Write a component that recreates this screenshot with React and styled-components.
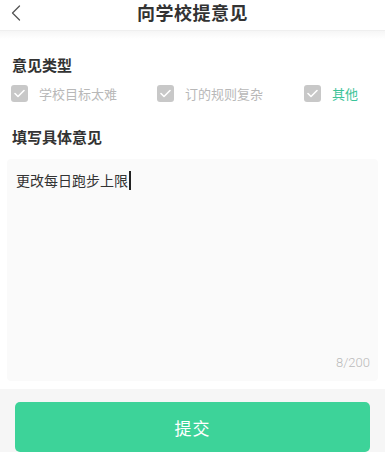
import React from 'react'
import styled, { createGlobalStyle } from 'styled-components'

const GlobalStyle = createGlobalStyle`
  html, body {
    margin: 0;
    padding: 0;
    background: #ffffff;
  }
  body {
    font-family: 'Noto Sans CJK SC', 'Noto Sans', sans-serif;
    color: #333333;
  }
`

const Page = styled.div`
  width: 385px;
  height: 452px;
  overflow: hidden;
  display: flex;
  flex-direction: column;
  background: #ffffff;
`

const Header = styled.div`
  position: relative;
  height: 35px;
  display: flex;
  align-items: center;
  justify-content: center;
  border-bottom: 1px solid #efefef;
`

const BackButton = styled.div`
  position: absolute;
  left: 8px;
  top: 4px;
  width: 16px;
  height: 18px;
  display: flex;
  align-items: center;
  justify-content: center;
`

const Title = styled.h1`
  margin: 0;
  margin-top: -5px;
  font-size: 18px;
  font-weight: 700;
  color: #333333;
  letter-spacing: 0.5px;
`

const Shade = styled.div`
  height: 10px;
  background: linear-gradient(#f6f6f6, #ffffff);
`

const Body = styled.div`
  padding: 0 7px;
  display: flex;
  flex-direction: column;
`

const SectionTitle = styled.div`
  font-size: 15px;
  font-weight: 700;
  color: #333333;
  line-height: 20px;
  padding-left: 5px;
  margin-top: ${p => p.top}px;
`

const Options = styled.div`
  display: flex;
  align-items: center;
  padding-left: 4px;
  margin-top: 9px;
  height: 19px;
`

const Option = styled.label`
  display: flex;
  align-items: center;
  gap: 11px;
  width: ${p => p.w}px;
  font-size: 13px;
  color: ${p => (p.active ? '#3cc499' : '#b8b8b8')};
`

const Box = styled.span`
  width: 17px;
  height: 17px;
  border-radius: 3px;
  background: #c8c8c8;
  display: flex;
  align-items: center;
  justify-content: center;
`

const Field = styled.div`
  margin-top: 12px;
  height: 222px;
  background: #fafafa;
  border-radius: 4px;
  display: flex;
  flex-direction: column;
  justify-content: space-between;
  padding: 11px 8px 11px 9px;
  box-sizing: border-box;
`

const Typed = styled.div`
  font-size: 14px;
  line-height: 20px;
  color: #333333;
  display: flex;
  align-items: center;
`

const Caret = styled.span`
  width: 1.5px;
  height: 19px;
  background: #222222;
  margin-left: 1px;
`

const Counter = styled.div`
  align-self: flex-end;
  font-size: 13px;
  font-weight: 300;
  color: #bbbbbb;
  font-family: 'Roboto', 'Noto Sans', sans-serif;
`

const Footer = styled.div`
  margin-top: 8px;
  flex: 1;
  background: #f6f6f6;
  padding: 13px 15px 0 15px;
`

const SubmitButton = styled.button`
  width: 100%;
  height: 50px;
  border: none;
  border-radius: 5px;
  background: #3dd399;
  color: #ffffff;
  font-size: 17px;
  font-family: 'Noto Sans CJK SC', sans-serif;
  letter-spacing: 1px;
`

const Check = () => (
  <svg width="11" height="9" viewBox="0 0 11 9" fill="none">
    <path d="M1 4.5 L4 7.5 L10 1.5" stroke="#ffffff" strokeWidth="1.6" strokeLinecap="round" strokeLinejoin="round" />
  </svg>
)

const options = [
  { label: '学校目标太难', w: 146 },
  { label: '订的规则复杂', w: 147 },
  { label: '其他', w: 60, active: true },
]

export default function App() {
  return (
    <Page>
      <GlobalStyle />
      <Header>
        <BackButton>
          <svg width="10" height="16" viewBox="0 0 10 16" fill="none">
            <path d="M8.5 1 L1.5 8 L8.5 15" stroke="#555555" strokeWidth="1.3" strokeLinecap="round" strokeLinejoin="round" />
          </svg>
        </BackButton>
        <Title>向学校提意见</Title>
      </Header>
      <Shade />
      <Body>
        <SectionTitle top={16}>意见类型</SectionTitle>
        <Options>
          {options.map(o => (
            <Option key={o.label} w={o.w} active={o.active}>
              <Box>
                <Check />
              </Box>
              {o.label}
            </Option>
          ))}
        </Options>
        <SectionTitle top={24}>填写具体意见</SectionTitle>
        <Field>
          <Typed>
            更改每日跑步上限
            <Caret />
          </Typed>
          <Counter>8/200</Counter>
        </Field>
      </Body>
      <Footer>
        <SubmitButton>提交</SubmitButton>
      </Footer>
    </Page>
  )
}
